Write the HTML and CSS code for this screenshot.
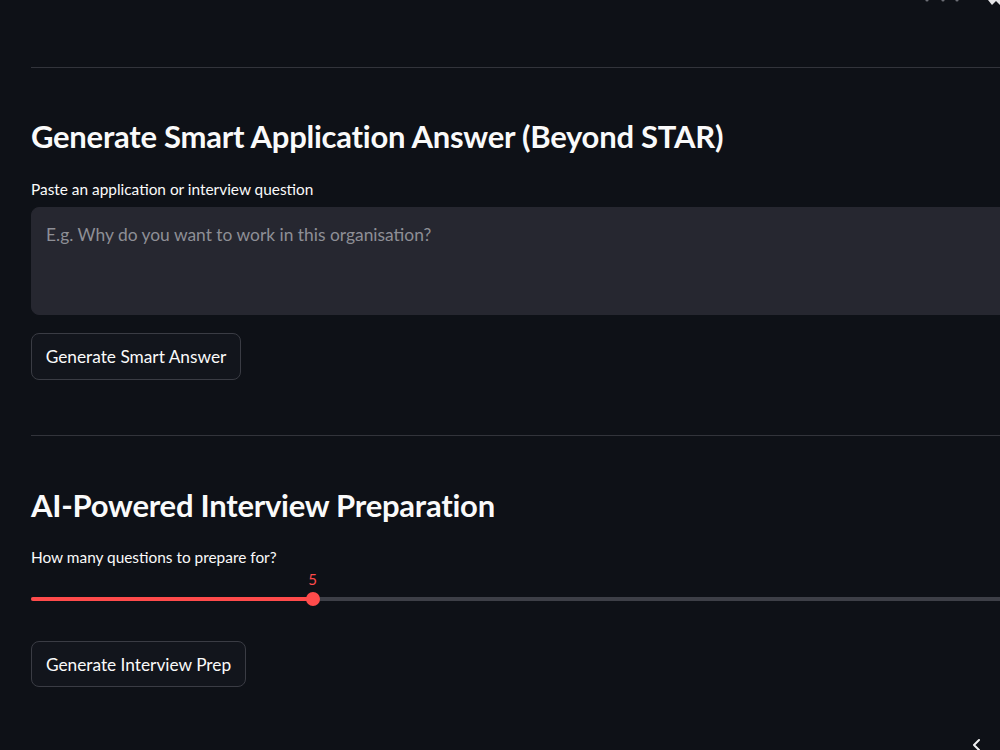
FILE: index.html
```html
<!DOCTYPE html>
<html lang="en">
<head>
<meta charset="utf-8">
<title>Smart Application Answer</title>
<link rel="stylesheet" href="styles.css">
</head>
<body>
<div class="toolbar">
  <svg width="100" height="8" viewBox="0 0 100 8">
    <circle cx="27" cy="0" r="1.6" fill="#6b6d75"/>
    <circle cx="43" cy="0" r="1.6" fill="#6b6d75"/>
    <circle cx="57" cy="0" r="1.6" fill="#6b6d75"/>
    <path d="M88 0 L92 5 L96 1 L100 5 L100 0 Z" fill="#e6e6e8"/>
  </svg>
</div>
<main class="main">
  <hr class="divider first">
  <section class="section">
    <h2 class="heading">Generate Smart Application Answer (Beyond STAR)</h2>
    <label class="label" for="q">Paste an application or interview question</label>
    <textarea id="q" class="textarea" placeholder="E.g. Why do you want to work in this organisation?"></textarea>
    <button class="btn btn-smart">Generate Smart Answer</button>
  </section>
  <hr class="divider second">
  <section class="section">
    <h2 class="heading heading-2">AI-Powered Interview Preparation</h2>
    <div class="label label-2">How many questions to prepare for?</div>
    <div class="slider">
      <div class="slider-value" style="width:282px">5</div>
      <div class="track">
        <div class="track-fill" style="width:282px"></div>
        <div class="thumb" style="left:282px"></div>
      </div>
    </div>
    <button class="btn btn-prep">Generate Interview Prep</button>
  </section>
</main>
<div class="collapse">
  <svg width="14" height="14" viewBox="0 0 14 14"><polyline points="9,2 4,7 9,12" fill="none" stroke="#f0f0f2" stroke-width="2" stroke-linecap="round" stroke-linejoin="round"/></svg>
</div>
</body>
</html>
```
FILE: styles.css
```css
html, body {
  margin: 0;
  padding: 0;
  background: #0e1117;
  overflow: hidden;
  width: 1000px;
  height: 750px;
}
body {
  font-family: Lato, "Open Sans", sans-serif;
  color: #fafafa;
  position: relative;
}
.main {
  width: 1060px;
  padding-left: 31px;
  display: flex;
  flex-direction: column;
}
.divider {
  border: 0;
  border-top: 1px solid #32343b;
  margin: 0;
  width: 100%;
}
.divider.first { margin-top: 67px; }
.divider.second { margin-top: 55px; }
.section {
  display: flex;
  flex-direction: column;
  align-items: flex-start;
}
.heading {
  font-size: 31px;
  font-weight: 700;
  line-height: 34px;
  margin: 51px 0 0 0;
  letter-spacing: -0.25px;
}
.heading-2 { margin-top: 52px; }
.label {
  font-size: 15.4px;
  line-height: 20px;
  margin-top: 26px;
}
.label-2 { margin-top: 25px; }
.textarea {
  margin-top: 8px;
  width: 100%;
  height: 108px;
  box-sizing: border-box;
  background: #262730;
  border: 1px solid #262730;
  border-radius: 8px;
  padding: 14px 14px;
  font-family: inherit;
  font-size: 17.4px;
  line-height: 25px;
  color: #fafafa;
  resize: none;
  outline: none;
}
.textarea::placeholder { color: #8e8f96; }
.btn {
  margin-top: 18px;
  height: 47px;
  box-sizing: border-box;
  padding: 0 10px;
  background: #12151c;
  border: 1px solid #3a3c44;
  border-radius: 8px;
  color: #fafafa;
  font-family: inherit;
  font-size: 17.3px;
  cursor: pointer;
}
.btn-smart { width: 210px; }
.btn-prep { width: 215px; margin-top: 40px; height: 46px; }
.slider {
  width: 100%;
  margin-top: 4px;
}
.slider-value {
  color: #ff4b4b;
  font-size: 15px;
  line-height: 16px;
  text-align: right;
  margin-left: 4px;
}
.track {
  position: relative;
  margin-top: 10px;
  height: 4px;
  border-radius: 2px;
  background: #3d3f47;
}
.track-fill {
  height: 4px;
  border-radius: 2px;
  background: #ff4b4b;
}
.thumb {
  position: absolute;
  top: -5px;
  margin-left: -7px;
  width: 14px;
  height: 14px;
  border-radius: 50%;
  background: #ff4b4b;
}
.toolbar {
  position: absolute;
  top: 0;
  right: 0;
  line-height: 0;
}
.collapse {
  position: absolute;
  left: 970px;
  top: 738px;
  line-height: 0;
}
```
